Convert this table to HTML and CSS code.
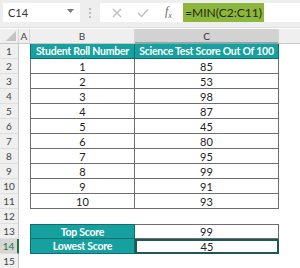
FILE: index.html
```html
<!DOCTYPE html>
<html>
<head>
<meta charset="utf-8">
<link rel="stylesheet" href="styles.css">
</head>
<body>
<div class="toolbar">
  <div class="namebox"><span>C14</span><svg class="caret" width="7" height="4" viewBox="0 0 7 4"><path d="M0 0H7L3.5 4Z" fill="#777"/></svg></div>
  <div class="dots"><i></i><i></i><i></i></div>
  <div class="fbar">
    <svg class="ico" width="10" height="10" viewBox="0 0 10 10"><path d="M1 1L9 9M9 1L1 9" stroke="#bdbdbd" stroke-width="1.3"/></svg>
    <svg class="ico" width="12" height="10" viewBox="0 0 12 10"><path d="M1 5L4.5 8.5L11 1.5" stroke="#bdbdbd" stroke-width="1.5" fill="none"/></svg>
    <span class="fx">f<sub>x</sub></span>
    <div class="formula">=MIN(C2:C11)</div>
  </div>
</div>
<div class="sheet">
  <div class="ch corner"><svg width="10" height="10" viewBox="0 0 10 10"><path d="M10 0V10H0Z" fill="#c4c4c4"/></svg></div>
  <div class="ch">A</div>
  <div class="ch">B</div>
  <div class="ch sel">C</div>
  <div class="ch rest"></div>

  <div class="rh">1</div><div class="c"></div><div class="c th l">Student Roll Number</div><div class="c th">Science Test Score Out Of 100</div><div class="c"></div>
  <div class="rh">2</div><div class="c"></div><div class="c d l">1</div><div class="c d">85</div><div class="c"></div>
  <div class="rh">3</div><div class="c"></div><div class="c d l">2</div><div class="c d">53</div><div class="c"></div>
  <div class="rh">4</div><div class="c"></div><div class="c d l">3</div><div class="c d">98</div><div class="c"></div>
  <div class="rh">5</div><div class="c"></div><div class="c d l">4</div><div class="c d">87</div><div class="c"></div>
  <div class="rh">6</div><div class="c"></div><div class="c d l">5</div><div class="c d">45</div><div class="c"></div>
  <div class="rh">7</div><div class="c"></div><div class="c d l">6</div><div class="c d">80</div><div class="c"></div>
  <div class="rh">8</div><div class="c"></div><div class="c d l">7</div><div class="c d">95</div><div class="c"></div>
  <div class="rh">9</div><div class="c"></div><div class="c d l">8</div><div class="c d">99</div><div class="c"></div>
  <div class="rh">10</div><div class="c"></div><div class="c d l">9</div><div class="c d">91</div><div class="c"></div>
  <div class="rh">11</div><div class="c"></div><div class="c d l">10</div><div class="c d">93</div><div class="c"></div>
  <div class="rh">12</div><div class="c"></div><div class="c"></div><div class="c"></div><div class="c"></div>
  <div class="rh">13</div><div class="c"></div><div class="c th l top">Top Score</div><div class="c d top">99</div><div class="c"></div>
  <div class="rh rsel">14</div><div class="c"></div><div class="c th l">Lowest Score</div><div class="c d active">45</div><div class="c"></div>
  <div class="rh">15</div><div class="c"></div><div class="c"></div><div class="c"></div><div class="c"></div>
</div>
</body>
</html>
```
FILE: styles.css
```css
* { box-sizing: border-box; }
html, body { margin: 0; padding: 0; background: #fff; }
body { width: 300px; height: 268px; overflow: hidden; font-family: Lato, "Open Sans", sans-serif; }

.toolbar {
  height: 28px;
  background: #eeeeee;
  display: flex;
  align-items: flex-start;
  padding: 3px 0 0 3px;
  border-bottom: 1px solid #e0e0e0;
}
.namebox {
  width: 77px; height: 19px;
  background: #fff;
  display: flex; align-items: center; justify-content: space-between;
  padding: 0 6px 0 5px;
  font-size: 11px; color: #333;
}
.caret { margin-top: -3px; }
.dots {
  width: 20px; height: 19px;
  display: flex; flex-direction: column; align-items: center; justify-content: center; gap: 2px;
}
.dots i { display: block; width: 2px; height: 2px; background: #bbb; }
.fbar {
  flex: 1; height: 19px;
  background: #fff;
  display: flex; align-items: center;
  padding-left: 12px;
}
.fbar .ico { margin-right: 15px; }
.fbar .ico + .ico { margin-right: 16px; }
.fx { font-family: "Liberation Serif", serif; font-style: italic; font-size: 12px; color: #666; width: 16px; }
.fx sub { font-size: 8px; }
.formula {
  margin-left: 2px;
  width: 81px; height: 19px;
  background: #8db73c;
  color: #1e2a0e;
  font-size: 12px;
  display: flex; align-items: center; justify-content: center;
}

.sheet {
  display: grid;
  grid-template-columns: 19px 11px 105px 144px 1fr;
  grid-template-rows: 15px repeat(15, 15px);
  margin-top: 1px;
}
.ch {
  background: #efefef;
  border-right: 1px solid #d6d6d6;
  border-bottom: 1px solid #c8c8c8;
  font-size: 10px; color: #444;
  display: flex; align-items: center; justify-content: center;
}
.ch.corner { justify-content: flex-end; align-items: flex-end; padding: 0 2px 2px 0; }
.ch.sel { background: #d2d2d2; border-bottom: 2px solid #8aa; color: #333; }
.ch.rest { border-right: none; }
.rh {
  background: #efefef;
  border-right: 1px solid #c8c8c8;
  border-bottom: 1px solid #dedede;
  font-size: 10px; color: #444;
  display: flex; align-items: center; justify-content: center;
}
.rh.rsel { background: #d6d6d6; color: #217346; border-right: 2px solid #217346; }

.c {
  font-size: 11px; color: #222;
  display: flex; align-items: center; justify-content: center;
  white-space: nowrap; overflow: hidden;
}
.th {
  background: #17a0a0;
  color: #fff; font-weight: bold;
  font-size: 10.5px;
  letter-spacing: -0.25px;
  border-right: 1px solid #0f6f6f;
  border-bottom: 1px solid #0f6f6f;
}
.th.l { border-left: 1px solid #0f6f6f; }
.d {
  background: #fff;
  border-right: 1px solid #6e6e6e;
  border-bottom: 1px solid #6e6e6e;
}
.d.l { border-left: 1px solid #6e6e6e; }
.top { border-top: 1px solid #6e6e6e; }
.th.top { border-top: 1px solid #0f6f6f; }
.active { border: 2px solid #1f5656; }
```
